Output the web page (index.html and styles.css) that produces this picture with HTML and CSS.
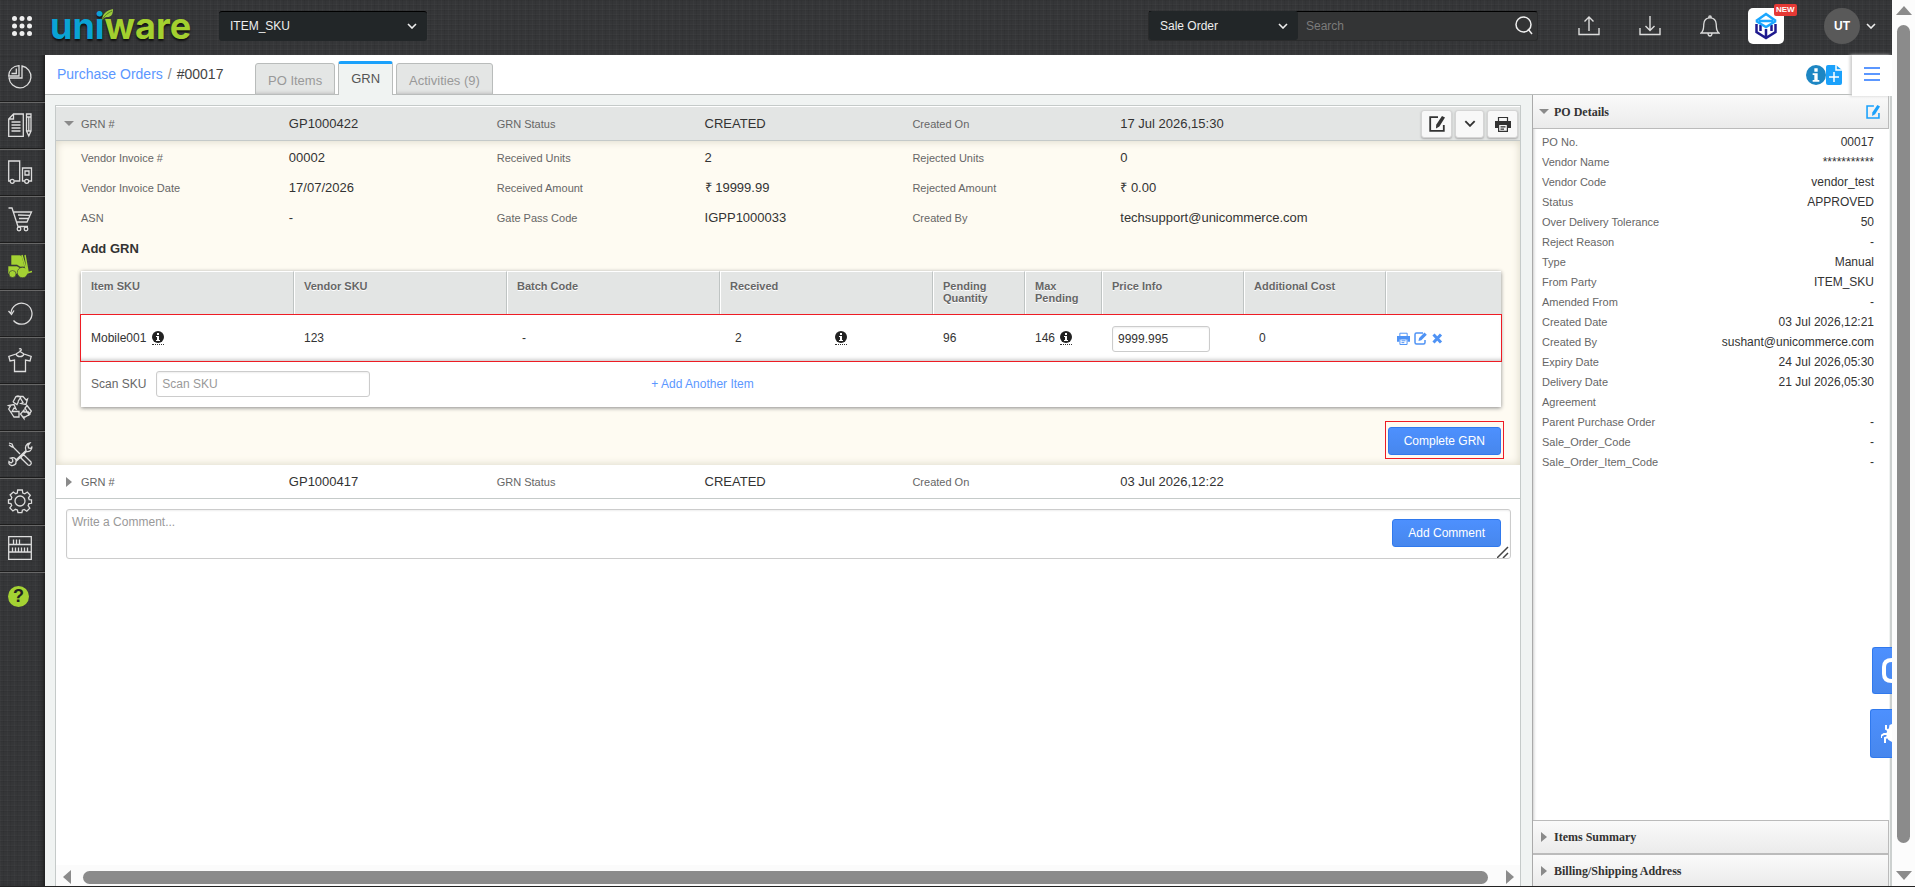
FILE: index.html
```html
<!DOCTYPE html>
<html lang="en">
<head>
<meta charset="utf-8">
<title>Uniware - Purchase Order #00017</title>
<link rel="stylesheet" href="styles.css">
</head>
<body>
<svg class="defs" aria-hidden="true">
  <symbol id="i-info" viewBox="0 0 12 12"><circle cx="6" cy="6" r="6" fill="currentColor"/><path d="M5 2h2v2H5zM4 5h3v4h1v1H4V9h1V6H4z" fill="#fff"/></symbol>
  <symbol id="i-chev" viewBox="0 0 10 6"><path d="M1 1l4 4 4-4" fill="none" stroke="currentColor" stroke-width="1.6"/></symbol>
  <symbol id="i-print" viewBox="0 0 16 16"><path d="M3.500 5V1.500h9V5" fill="none" stroke="currentColor" stroke-width="1.200"/><path d="M0 5h16v7h-3V9H3v3H0z" fill="currentColor"/><path d="M3.600 8.500h8.800v6.900H3.600zM5.500 10.800h5M5.500 13.100h3.500" fill="none" stroke="currentColor" stroke-width="1.200"/></symbol>
  <symbol id="i-edit" viewBox="0 0 16 16"><path d="M9 1.200H1.200v13.600h13.600V9" fill="none" stroke="currentColor" stroke-width="1.800"/><path d="M13 0l3 1.600-5.600 9-3.400 2 .2-3.900z" fill="currentColor"/></symbol>
</svg>
<div class="app">
  <header class="topbar">
    <button class="apps" aria-label="Apps">
      <svg width="20" height="20" viewBox="0 0 20 20" fill="#eee"><circle cx="2.500" cy="2.500" r="2.500"/><circle cx="10" cy="2.500" r="2.500"/><circle cx="17.500" cy="2.500" r="2.500"/><circle cx="2.500" cy="10" r="2.500"/><circle cx="10" cy="10" r="2.500"/><circle cx="17.500" cy="10" r="2.500"/><circle cx="2.500" cy="17.500" r="2.500"/><circle cx="10" cy="17.500" r="2.500"/><circle cx="17.500" cy="17.500" r="2.500"/></svg>
    </button>
    <a class="logo" href="#"><span class="logo-a">uni</span><span class="logo-b">ware</span>
      <svg class="leaf" width="12" height="12" viewBox="0 0 12 12"><path d="M0 11C1 4 4 2 11 0c0 6-2 8-6 8-2 0-3 1-5 3z" fill="#9ccb3b"/><path d="M0 11C3 6 6 4 10 2" stroke="#4f7a1e" fill="none"/></svg>
    </a>
    <div class="select facility"><select aria-label="Facility"><option>ITEM_SKU</option></select><svg class="chev"><use href="#i-chev"/></svg></div>
    <div class="search">
      <div class="select kind"><select aria-label="Search type"><option>Sale Order</option></select><svg class="chev"><use href="#i-chev"/></svg></div>
      <input type="text" placeholder="Search" aria-label="Search">
      <button aria-label="Run search"><svg width="18" height="19" viewBox="0 0 18 19" fill="none" stroke="#eee" stroke-width="1.500"><ellipse cx="8.500" cy="8.500" rx="7.500" ry="7.500"/><path d="M13 13l4 5"/></svg></button>
    </div>
    <div class="tools">
      <button aria-label="Export"><svg width="22" height="20" viewBox="0 0 22 20" fill="none" stroke="#ddd" stroke-width="1.400"><path d="M1 12v6.500h20V12M11 15V1M6.500 5.500L11 1l4.500 4.500"/></svg></button>
      <button aria-label="Import"><svg width="22" height="20" viewBox="0 0 22 20" fill="none" stroke="#ddd" stroke-width="1.400"><path d="M1 12v6.500h20V12M11 0v14M6.500 10L11 14.500l4.500-4.500"/></svg></button>
      <button aria-label="Notifications"><svg width="20" height="22" viewBox="0 0 20 22" fill="none" stroke="#ddd" stroke-width="1.300"><path d="M1 18c3-2 2.500-5 2.800-9C4 5 6.500 2.800 10 2.800S16 5 16.200 9c.3 4-.2 7 2.800 9zM8 18c0 4 4 4 4 0M8.700 2.800c0-2.400 2.600-2.400 2.600 0"/></svg></button>
    </div>
    <a class="product" href="#" aria-label="New product">
      <svg width="24" height="28" viewBox="0 0 24 28" fill="none" stroke-width="2.500"><path d="M2.500 12v8l9.500 6 9.500-6v-8M12 17v9M6.500 13v6M17.500 13v6" stroke="#1f1a8f"/><path d="M2 9l10-7 10 7M2 9l10 6 10-6M5 9h14" stroke="#1ba7ff"/></svg>
      <span class="new">NEW</span>
    </a>
    <button class="user"><span class="avatar">UT</span><svg class="chev"><use href="#i-chev"/></svg></button>
  </header>

  <div class="body">
    <nav class="side">
      <a href="#" class="first" aria-label="Dashboard"><svg viewBox="0 0 24 24"><path d="M14 1a11 11 0 1 1-13 12h13z"/><path d="M11 .7V11H.7C1 5 5 1 11 .7zM8.300 3.500V8.500H3.500"/></svg></a>
      <a href="#" aria-label="Orders"><svg viewBox="0 0 24 24"><path d="M5.500 1H15.300V23.300H.7V6zM5.500 1v5H.7M3.500 9h9M3.500 12h9M3.500 15h9M3.500 18h9M18.500 1h4.500v17l-2.200 5-2.300-5zM18.500 4h4.500M18.500 18h4.500M20.800 4v14"/></svg></a>
      <a href="#" aria-label="Shipping"><svg viewBox="0 0 24 24"><path d="M2 21H.7V1h11v20H6.500M16.500 21h-2V8h9v13h-2.500M17 11h4v4h-4z"/><circle cx="4.200" cy="21.300" r="2"/><circle cx="18.700" cy="21.300" r="2"/></svg></a>
      <a href="#" aria-label="Products"><svg viewBox="0 0 24 24"><path d="M.5 1H4l6 18.500h10M5.200 5h18.300l-4.500 10H8.500M10 8l11.500.3M11 11.500h9"/><circle cx="11" cy="22" r="1.800"/><circle cx="18" cy="22" r="1.800"/></svg></a>
      <a href="#" class="on" aria-label="Inbound"><svg viewBox="0 0 24 24"><path d="M3 1h9l2 1 3 11h-5l-3-2H3z"/><path d="M0 12h9l5 3h6v5H0z"/><circle cx="4.500" cy="20" r="3.500"/><circle cx="14.500" cy="18.500" r="5.200"/><path class="mast" d="M14 1l5 17M17 1l3 17M19 19l5-1.500"/></svg></a>
      <a href="#" aria-label="Returns"><svg viewBox="0 0 24 24"><path d="M3 12a10.500 10.500 0 1 1 2.500 7.500M.5 10L3.500 13.500 6 9.500"/></svg></a>
      <a href="#" aria-label="Catalog"><svg viewBox="0 0 24 24"><path d="M8 6L.8 8.500 2 13l4.500-1v11.500h11V12l4.500 1 1.200-4.500L16 6c-1 3.500-7 3.500-8 0zM8 6l4-2.500L16 6M12 3.500V3c2.500-1 1-3-1-2"/></svg></a>
      <a href="#" aria-label="Materials"><svg viewBox="0 0 24 24"><path d="M5 7l3-5.500c2-1 3.500-.5 4.500 1L10 6.500M5 7l4 2.500 1.500-3M8 1.500h7L18 5l1.500-1-1.500 5.500-5-1 2-1-3-5M4 19l-3.300-5 1.500-2.500L.5 10.500l5.500-1L8 14l-2-1-2 3.500h7V22H6zM17 22h-1v1.500L12.500 19l3.500-4v2h4.500L22 19zM19 10.500l4.300 5.500-2.300 4-4-7z"/></svg></a>
      <a href="#" aria-label="Tools"><svg viewBox="0 0 24 24"><path d="M3.500 23.500c-2-.5-3-2-2.500-4l2 1.500 1.800-1.500L4.500 17l-2-1c3-1 5 0 5.500 2L18 8.500c-1.500-3 0-7 4-7.700L20 3.500l.5 2.500 2.800.5L24 4.500c0 4-3 5.500-5.500 5L8 19.500c.3 2.500-1.500 4.300-4.500 4zM1 1l3 1 1.500 3.500L12 12M5.500 5.500L4 5 1 3zM14 14l2-1 7 7c1 2-1 4-3 3l-7-7z"/></svg></a>
      <a href="#" aria-label="Settings"><svg viewBox="0 0 24 24"><circle cx="12" cy="12" r="5"/><path d="M9.700 1h4.600l.5 3 2 .8L19.300 3l3 3.200-1.800 2.600.7 1.800 2.300.2v3.500l-2.600.4-.8 2 1.700 2.500-3 3-2.600-1.700-1.800.7-.5 2.500H10l-.6-2.700-2-.7-2.500 1.700-3-3 1.800-2.600-.8-1.800-2.400-.4V10.800l2.600-.4.7-2-1.700-2.500L5.300 3l2.500 1.700L9.300 4z"/></svg></a>
      <a href="#" aria-label="Warehouse"><svg viewBox="0 0 24 24"><path d="M.7.700h22.600v22.600H.7zM.7 8.500h22.600M.7 16h22.600M5.500 3.500v5M8.500 3.500v5M11.500 3.500v5M4.500 11.500V16M7.500 11.500V16M10.500 11.500V16M13.500 11.500V16M16.500 11.500V16M19.500 11.500V16"/></svg></a>
      <a href="#" class="help" aria-label="Help"><b>?</b></a>
    </nav>

    <main class="main">
      <div class="crumbs">
        <div class="path"><a href="#">Purchase Orders</a><i>/</i><span>#00017</span></div>
        <div class="tabs">
          <button>PO Items</button>
          <button class="active">GRN</button>
          <button>Activities (9)</button>
        </div>
        <div class="quick">
          <svg class="qinfo"><use href="#i-info"/></svg>
          <svg width="16" height="20" viewBox="0 0 16 20"><path d="M2 0h8l6 5v13a2 2 0 0 1-2 2H2a2 2 0 0 1-2-2V2a2 2 0 0 1 2-2z" fill="#1ba1fb"/><path d="M10 0v5h6M8 7v10M3 12h10" stroke="#fff" stroke-width="1.500" fill="none"/></svg>
        </div>
        <button class="menu" aria-label="Menu"><span></span><span></span><span></span></button>
      </div>

      <div class="content">
        <section class="panel">
          <div class="grn-head open">
            <button class="tri" aria-label="Collapse"></button>
            <div class="facts">
              <span>GRN #</span><b>GP1000422</b><span>GRN Status</span><b>CREATED</b><span>Created On</span>
              <div class="last"><b>17 Jul 2026,15:30</b>
                <div class="acts">
                  <button aria-label="Edit"><svg><use href="#i-edit"/></svg></button>
                  <button class="slim" aria-label="More"><svg class="chev"><use href="#i-chev"/></svg></button>
                  <button aria-label="Print"><svg><use href="#i-print"/></svg></button>
                </div>
              </div>
            </div>
          </div>
          <div class="detail">
            <div class="facts rows">
              <span>Vendor Invoice #</span><b>00002</b><span>Received Units</span><b>2</b><span>Rejected Units</span><b>0</b>
              <span>Vendor Invoice Date</span><b>17/07/2026</b><span>Received Amount</span><b>₹ 19999.99</b><span>Rejected Amount</span><b>₹ 0.00</b>
              <span>ASN</span><b>-</b><span>Gate Pass Code</span><b>IGPP1000033</b><span>Created By</span><b>techsupport@unicommerce.com</b>
            </div>
            <h2>Add GRN</h2>
            <div class="items">
              <table>
                <colgroup><col class="w15"><col class="w15"><col class="w15"><col class="w15"><col class="wq"><col class="wm"><col class="w10"><col class="w10"><col></colgroup>
                <thead><tr><th>Item SKU</th><th>Vendor SKU</th><th>Batch Code</th><th>Received</th><th>Pending Quantity</th><th>Max Pending</th><th>Price Info</th><th>Additional Cost</th><th></th></tr></thead>
                <tbody><tr>
                  <td>Mobile001 <svg class="info"><use href="#i-info"/></svg></td>
                  <td>123</td>
                  <td class="in">-</td>
                  <td class="in"><div class="recv"><span>2</span><svg class="info"><use href="#i-info"/></svg></div></td>
                  <td>96</td>
                  <td>146 <svg class="info"><use href="#i-info"/></svg></td>
                  <td><input class="field price" type="text" value="9999.995" aria-label="Price"></td>
                  <td class="in">0</td>
                  <td><div class="rowacts">
                    <button aria-label="Print row"><svg><use href="#i-print"/></svg></button>
                    <button aria-label="Edit row"><svg viewBox="0 0 13 13"><path d="M9 1H2.500Q1 1 1 2.500v8Q1 12 2.500 12h7q1.500 0 1.500-1.500V8" fill="none" stroke="currentColor" stroke-width="1.500"/><path d="M10.500.5l2.300 2.200L7.300 8.300 4.500 9l.6-2.900z" fill="currentColor"/></svg></button>
                    <button aria-label="Remove row"><svg viewBox="0 0 13 13"><path d="M2.500 2.500l7.500 8M10 2.500l-7.500 8" stroke="currentColor" stroke-width="3"/></svg></button>
                  </div></td>
                </tr></tbody>
              </table>
              <div class="scan"><label for="scan">Scan SKU</label><input id="scan" class="field" type="text" placeholder="Scan SKU"><a href="#">+ Add Another Item</a></div>
            </div>
            <div class="done"><div class="mark"><button class="primary">Complete GRN</button></div></div>
          </div>
          <div class="grn-head">
            <button class="tri right" aria-label="Expand"></button>
            <div class="facts"><span>GRN #</span><b>GP1000417</b><span>GRN Status</span><b>CREATED</b><span>Created On</span><b>03 Jul 2026,12:22</b></div>
          </div>
          <div class="comment">
            <textarea class="field" placeholder="Write a Comment..." aria-label="Comment"></textarea>
            <button class="primary">Add Comment</button>
            <svg class="grip" width="12" height="12" viewBox="0 0 12 12"><path d="M0 12L11 1M6 12l5-5" stroke="#444" stroke-width="1.500"/></svg>
          </div>
          <div class="hscroll"><svg width="8" height="14" viewBox="0 0 8 14"><path d="M8 0v14L0 7z" fill="#8b8b8b"/></svg><i></i><svg width="8" height="14" viewBox="0 0 8 14"><path d="M0 0v14l8-7z" fill="#8b8b8b"/></svg></div>
        </section>

        <aside class="info-pane">
          <h3 class="first"><button class="tri" aria-label="Collapse details"></button>PO Details<svg class="po-edit"><use href="#i-edit"/></svg></h3>
          <dl>
            <div><dt>PO No.</dt><dd>00017</dd></div>
            <div><dt>Vendor Name</dt><dd>***********</dd></div>
            <div><dt>Vendor Code</dt><dd>vendor_test</dd></div>
            <div><dt>Status</dt><dd>APPROVED</dd></div>
            <div><dt>Over Delivery Tolerance</dt><dd>50</dd></div>
            <div><dt>Reject Reason</dt><dd>-</dd></div>
            <div><dt>Type</dt><dd>Manual</dd></div>
            <div><dt>From Party</dt><dd>ITEM_SKU</dd></div>
            <div><dt>Amended From</dt><dd>-</dd></div>
            <div><dt>Created Date</dt><dd>03 Jul 2026,12:21</dd></div>
            <div><dt>Created By</dt><dd>sushant@unicommerce.com</dd></div>
            <div><dt>Expiry Date</dt><dd>24 Jul 2026,05:30</dd></div>
            <div><dt>Delivery Date</dt><dd>21 Jul 2026,05:30</dd></div>
            <div><dt>Agreement</dt><dd></dd></div>
            <div><dt>Parent Purchase Order</dt><dd>-</dd></div>
            <div><dt>Sale_Order_Code</dt><dd>-</dd></div>
            <div><dt>Sale_Order_Item_Code</dt><dd>-</dd></div>
          </dl>
          <h3><button class="tri right" aria-label="Expand items"></button>Items Summary</h3>
          <h3 class="end"><button class="tri right" aria-label="Expand addresses"></button>Billing/Shipping Address</h3>
        </aside>
      </div>
    </main>
  </div>
  <button class="dock chat" aria-label="Support"><svg width="10" height="25" viewBox="0 0 10 25"><path d="M10 2Q2 2 2 9v7q0 7 8 7" fill="none" stroke="#fff" stroke-width="4"/></svg></button>
  <button class="dock bug" aria-label="Report a bug"><svg width="11" height="24" viewBox="0 0 11 24"><path d="M11 2L8.500 3 8 6 6.500 8l-1 3v4l2 3 3.500 2z" fill="#fff"/><path d="M8 9L5 7V3M7 12H3l-3 2v2M7 15l-3 1v5" stroke="#fff" stroke-width="2" fill="none"/></svg></button>
</div>
<div class="vscroll"><svg width="16" height="9" viewBox="0 0 16 9"><path d="M0 9h16L8 0z" fill="#8b8b8b"/></svg><i></i><svg width="16" height="9" viewBox="0 0 16 9"><path d="M0 0h16L8 9z" fill="#8b8b8b"/></svg></div>
</body>
</html>
```
FILE: styles.css
```css
* { box-sizing: border-box; }
body { margin: 0; height: 100vh; display: flex; overflow: hidden; background: #fff; border-bottom: 1px solid #222; font: 12px/16px "Liberation Sans", Arial, sans-serif; color: #333; }
button { font: inherit; color: inherit; background: none; border: 0; padding: 0; display: flex; align-items: center; justify-content: center; }
input, select, textarea { font: inherit; color: inherit; }
a { color: #5b97ff; text-decoration: none; }
b { font-weight: normal; }
.defs { position: absolute; width: 0; height: 0; }
.chev { width: 10px; height: 6px; flex: none; }

.app { flex: 1; min-width: 0; display: flex; flex-direction: column; position: relative; overflow: hidden; }
.topbar, .side {
  background-color: #353638;
  background-image: repeating-linear-gradient(90deg, rgba(255,255,255,.02) 0 1px, transparent 1px 3px, rgba(0,0,0,.05) 3px 4px, transparent 4px 7px), repeating-linear-gradient(0deg, rgba(255,255,255,.02) 0 1px, transparent 1px 4px, rgba(0,0,0,.05) 4px 5px);
}
.topbar { height: 55px; flex: none; display: flex; align-items: center; padding: 0 16px 4px 12px; position: relative; }
.apps { width: 20px; height: 20px; }
.logo { position: relative; display: flex; width: 146px; margin-left: 18px; margin-right: 23px; font: 700 36px/36px Inter, sans-serif; text-shadow: 0 2px 2px #111; }
.logo-a { color: #0aa3d4; }
.logo-b { color: #a3d02f; }
.leaf { position: absolute; left: 52px; top: 1px; }
.select { position: relative; display: flex; align-items: center; height: 30px; background: #222628; border-radius: 3px; border-top: 1px solid #000; color: #eee; }
.select select { appearance: none; width: 100%; height: 100%; border: 0; background: none; padding: 0 11px; color: #eee; }
.select .chev { position: absolute; right: 10px; }
.facility { width: 208px; }
.search { display: flex; align-items: center; margin-left: auto; height: 30px; background: #333435; border-radius: 3px; border: 1px solid #2a2b2c; border-top-color: #000; padding-right: 4px; }
.kind { width: 149px; height: 29px; border-top: 0; }
.search input { width: 217px; border: 0; background: none; padding: 0 8px; color: #ddd; outline: 0; }
.search input::placeholder { color: #7b7b7b; opacity: 1; }
.tools { display: flex; align-items: center; gap: 39px; margin: 0 28px 0 40px; }
.product { position: relative; width: 36px; height: 36px; background: #fff; border-radius: 5px; display: flex; align-items: center; justify-content: center; margin-right: 40px; }
.new { position: absolute; left: 26px; top: -4px; background: #e53935; color: #fff; font: bold 8px/12px "Liberation Sans", sans-serif; padding: 0 2px; border-radius: 2px; }
.user { gap: 6px; color: #eee; }
.avatar { width: 36px; height: 36px; border-radius: 50%; background: #595959; color: #fff; font-weight: bold; line-height: 36px; }

.body { flex: 1; min-height: 0; display: flex; }
.side { width: 45px; flex: none; display: flex; flex-direction: column; box-shadow: inset -4px 0 4px -2px #1c1c1c; }
.side a { height: 47px; border-bottom: 1px solid #676767; box-shadow: inset 0 -1px 0 #1c1c1c; padding: 10px 8px; }
.side a.first { height: 48px; }
.side a.help { border: 0; box-shadow: none; }
.side svg { display: block; width: 24px; height: 24px; fill: none; stroke: #ddd; stroke-width: 1.3; overflow: visible; }
.side .on svg { fill: #a4d233; stroke: #343537; stroke-width: .6; }
.side .on .mast { stroke: #a4d233; stroke-width: 1.5; fill: none; }
.help b { display: block; width: 21px; height: 21px; margin-top: 3px; border-radius: 50%; background: #a4d233; color: #222; font-weight: bold; font-size: 18px; line-height: 21px; text-align: center; }

.main { flex: 1; min-width: 0; display: flex; flex-direction: column; background: #f0f3f2; }
.crumbs { height: 40px; flex: none; display: flex; background: #fff; border-bottom: 1px solid #b9bcbb; padding-left: 12px; }
.path { font-size: 14px; line-height: 38px; width: 198px; white-space: nowrap; color: #444; }
.path i { font-style: normal; color: #888; padding: 0 5px; }
.tabs { display: flex; align-items: flex-end; gap: 3px; margin-bottom: -1px; }
.tabs button { height: 32px; padding: 3px 12px 0; font-size: 13px; color: #999; background: #e4e6e5; border: 1px solid #b9bcbb; border-radius: 3px 3px 0 0; box-shadow: inset 0 -4px 4px -4px #aaa; }
.tabs .active { height: 34px; color: #555; background: #f0f3f2; border-top: 3px solid #1ba1fb; border-bottom: 0; box-shadow: none; padding: 0 12px 2px; }
.quick { display: flex; align-items: center; margin-left: auto; margin-right: 10px; }
.qinfo { width: 20px; height: 20px; color: #1d86c3; }
.menu { width: 40px; height: 41px; flex-direction: column; gap: 4px; background: #fff; box-shadow: -2px 0 3px #ccc; padding-bottom: 4px; position: relative; }
.menu span { width: 16px; height: 2px; background: #5b97ff; }

.content { flex: 1; min-height: 0; display: flex; border-right: 2px solid #ccd0cf; }
.panel { flex: 1; min-width: 0; display: flex; flex-direction: column; margin: 10px 11px 0 10px; background: #fff; border: 1px solid #c5cac9; border-bottom: 0; }
.grn-head { height: 34px; position: relative; display: flex; align-items: center; padding-left: 25px; border-bottom: 1px solid #c5cac9; flex: none; }
.grn-head.open { height: 35px; background: #e3e5e4; border-top: 1px solid #fff; }
.grn-head .tri { position: absolute; left: 8px; }
.tri { width: 10px; height: 10px; flex: none; }
.tri::before { content: ""; border: 5px solid transparent; border-top-color: #8a8a8a; border-bottom: 0; }
.tri.right::before { border: 5px solid transparent; border-left: 6px solid #8a8a8a; border-right: 0; }
.facts { flex: 1; display: grid; grid-template-columns: repeat(5, 26fr) 50fr; align-items: center; }
.facts span { font-size: 11px; color: #666; }
.facts b { font-size: 13px; }
.last { display: flex; justify-content: space-between; align-items: center; }
.acts { display: flex; gap: 3px; margin-right: 2px; }
.acts button { width: 31px; height: 28px; background: #f8f8f8; border-radius: 3px; border: 1px solid #d5d5d5; box-shadow: 0 1px 2px #aaa; }
.acts .slim { width: 29px; }
.acts svg { width: 16px; height: 16px; }
.acts .chev { width: 12px; height: 7px; }
.detail { flex: none; background: #fefbf2; box-shadow: inset 0 0 8px #d8d4c4; padding: 2px 19px 6px 25px; }
.rows { grid-auto-rows: 30px; margin-right: -19px; }
h2 { font-size: 13px; line-height: 20px; margin: 6px 0 12px; }
.items { background: #fff; box-shadow: 0 1px 4px #888; }
table { width: 100%; border-collapse: separate; border-spacing: 0; table-layout: fixed; }
.w15 { width: 15%; }
.wq { width: 92px; }
.wm { width: 77px; }
.w10 { width: 10%; }
th { height: 44px; background: #e3e5e4; border-left: 1px solid #fff; border-right: 1px solid #bfc4c3; border-top: 1px solid #fff; text-align: left; vertical-align: top; padding: 8px 9px; font-size: 11px; line-height: 12px; color: #666; text-shadow: 0 1px 0 #fff; }
th:last-child { border-right: 0; }
td { height: 46px; padding: 0 10px; vertical-align: middle; white-space: nowrap; }
td.in { padding-left: 15px; }
tbody tr { outline: 1px solid #ee1c24; position: relative; box-shadow: inset 0 -4px 4px -3px #bbb; }
.info { width: 12px; height: 14px; padding-bottom: 1px; vertical-align: -3px; border-bottom: 1px dotted #333; margin-left: 2px; color: #222; }
.recv { display: flex; align-items: center; }
.recv span { width: 98px; }
.field { background: #fff; border: 1px solid #ccc; border-radius: 3px; box-shadow: inset 0 1px 2px #eee; padding: 0 5px; height: 26px; outline: 0; }
.field::placeholder { color: #999; opacity: 1; }
.price { width: 98px; display: block; margin-top: 2px; }
.rowacts { display: flex; gap: 4px; padding-left: 1px; color: #4f93f5; }
.rowacts svg { width: 13px; height: 13px; }
.scan { display: flex; align-items: center; height: 46px; padding-left: 10px; color: #666; }
.scan .field { width: 214px; margin: 0 281px 0 10px; }
.done { display: flex; justify-content: flex-end; margin: 14px -3px 0 0; }
.mark { border: 1px solid #ee1c24; padding: 5px 2px 3px; }
.primary { height: 28px; padding: 0 15px; color: #fff; background: linear-gradient(#4d90fe, #4787ed); border: 1px solid #3079ed; border-radius: 3px; white-space: nowrap; }
.comment { position: relative; margin: 10px 9px 10px 10px; }
.comment textarea { display: block; width: 100%; height: 50px; padding: 4px 5px; resize: none; }
.comment .primary { position: absolute; right: 10px; top: 10px; }
.grip { position: absolute; right: 2px; bottom: 1px; }
.hscroll { margin-top: auto; height: 21px; flex: none; background: #fbfbfb; display: flex; align-items: center; padding: 3px 6px 0 7px; gap: 12px; }
.hscroll i { flex: 1; height: 13px; border-radius: 7px; background: #8b8b8b; margin-right: 6px; }

.info-pane { width: 357px; flex: none; margin-right: 1px; display: flex; flex-direction: column; background: #fff; border-left: 1px solid #aaa; box-shadow: inset 3px 0 3px -2px #ccc; }
h3 { height: 34px; flex: none; margin: 0; display: flex; align-items: center; gap: 5px; padding: 0 8px 0 6px; font: bold 12px/16px "Liberation Serif", serif; background: linear-gradient(#fafafa, #ebebeb); border: 1px solid #bbb; border-left: 0; }
h3.first { border-top: 0; }
h3.end { height: 32px; border-bottom: 0; }
.po-edit { width: 14px; height: 14px; color: #1ba1fb; margin-left: auto; }
dl { flex: 1; min-height: 0; margin: 0; padding: 3px 15px 0 9px; overflow: hidden; }
dl div { display: flex; justify-content: space-between; height: 20px; line-height: 20px; }
dt { font-size: 11px; color: #666; }
dd { margin: 0; }

.dock { position: absolute; right: 0; justify-content: flex-end; background: linear-gradient(#4d90fe, #4787ed); border: 1px solid #3079ed; border-right: 0; border-radius: 3px 0 0 3px; }
.chat { width: 20px; height: 47px; bottom: 192px; }
.bug { width: 22px; height: 49px; bottom: 128px; }

.vscroll { width: 23px; flex: none; background: #fcfcfc; display: flex; flex-direction: column; align-items: center; padding: 6px 0; gap: 10px; }
.vscroll i { flex: 1; width: 13px; border-radius: 7px; background: #8b8b8b; margin-bottom: 18px; }
```
